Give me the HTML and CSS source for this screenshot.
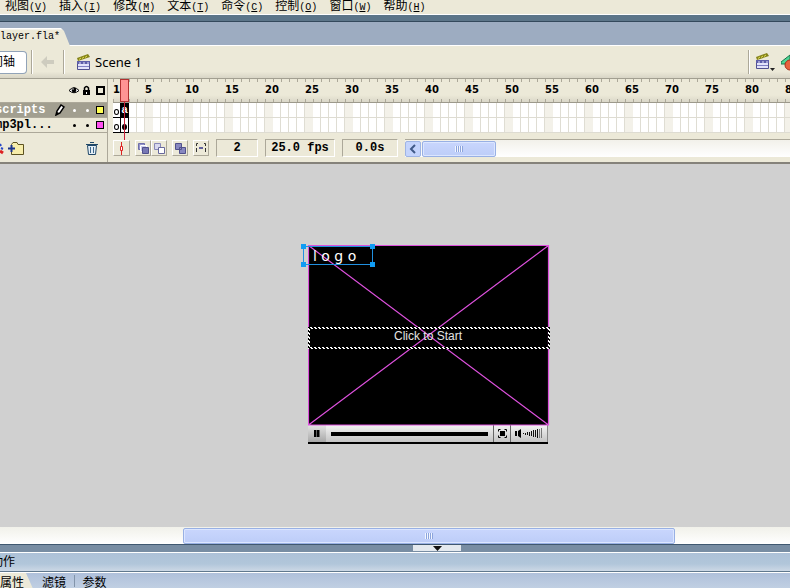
FILE: index.html
```
<!DOCTYPE html>
<html lang="zh-CN">
<head>
<meta charset="utf-8">
<title>player.fla</title>
<link rel="stylesheet" href="styles.css">
</head>
<body>
<svg class="defs" aria-hidden="true">
  <symbol id="clapper" viewBox="0 0 16 16">
    <path d="M1 4L12 0L14 3L2 7Z" fill="#85831a"/>
    <path d="M3 5.500L5 4M6 4.500L8 3M9 3.500L11 2" stroke="#e4df55"/>
    <path d="M1.500 7.500h12v8h-12z" fill="#e3e3fa" stroke="#50508f"/>
    <path d="M1 8.500h13" stroke="#5f5faa" stroke-width="3"/>
    <path d="M3 9h2M7 9h2M11 9h2" stroke="#e3e3fa"/>
    <path d="M2 12.500h11" stroke="#8080c4"/>
  </symbol>
</svg>

<nav class="menu">
  <a href="#">视图<span class="key">(<u>V</u>)</span></a>
  <a href="#">插入<span class="key">(<u>I</u>)</span></a>
  <a href="#">修改<span class="key">(<u>M</u>)</span></a>
  <a href="#">文本<span class="key">(<u>T</u>)</span></a>
  <a href="#">命令<span class="key">(<u>C</u>)</span></a>
  <a href="#">控制<span class="key">(<u>O</u>)</span></a>
  <a href="#">窗口<span class="key">(<u>W</u>)</span></a>
  <a href="#">帮助<span class="key">(<u>H</u>)</span></a>
</nav>
<div class="dock-edge"></div>
<div class="documents"><button class="doc-tab">layer.fla*</button></div>

<header class="edit-bar">
  <button class="timeline-toggle">间轴</button>
  <i class="rule"></i>
  <button class="back" aria-label="Back" disabled>
    <svg width="14" height="12" viewBox="0 0 14 12"><path d="M0 6L6 0V4H13V8H6V12Z" fill="#ceccbf"/></svg>
  </button>
  <i class="rule"></i>
  <a class="scene" href="#"><svg width="16" height="16"><use href="#clapper"/></svg>Scene 1</a>
  <div class="edit-right">
    <i class="rule"></i>
    <button class="edit-scene" aria-label="Edit scene">
      <svg width="21" height="19" viewBox="0 0 21 19"><use href="#clapper" width="16" height="16"/><path d="M15 15h5l-2.500 3z" fill="#222"/></svg>
    </button>
    <button class="edit-symbol" aria-label="Edit symbols">
      <svg width="9" height="17" viewBox="0 0 9 17"><path d="M0 8L9 1V10H0Z" fill="#4fd596" stroke="#187548"/><circle cx="9" cy="11" r="5" fill="#e8613d" stroke="#a83018"/></svg>
    </button>
  </div>
</header>

<main class="timeline">
  <section class="layers">
    <div class="layer-head">
      <svg width="36" height="11" viewBox="0 0 36 11">
        <path d="M0 5.500Q5 0 10 5.500Q5 10 0 5.500Z" fill="#fff" stroke="#000"/><circle cx="5" cy="5" r="2.400"/><circle cx="4" cy="4" r=".7" fill="#fff"/>
        <path d="M14 5h7v5h-7z"/><path d="M15.500 5V3Q17.500 0 19.500 3V5" fill="none" stroke="#000" stroke-width="1.500"/><path d="M17 7h1v2h-1z" fill="#fff"/>
        <path d="M28 2h7v7h-7z" fill="none" stroke="#000" stroke-width="2"/>
      </svg>
    </div>
    <div class="layer active">
      <span class="name">scripts</span>
      <svg class="pencil" width="10" height="12" viewBox="0 0 10 12"><path d="M1 11L2 7L6 1L9 3L5 9Z" fill="#fff" stroke="#000" stroke-width="1.500"/><path d="M1 11L2 8L4 9Z"/></svg>
      <i class="dot"></i><i class="dot"></i><i class="swatch yellow"></i>
    </div>
    <div class="layer">
      <span class="name">mp3pl...</span>
      <i class="dot"></i><i class="dot"></i><i class="swatch pink"></i>
    </div>
    <div class="layer-tools">
      <button aria-label="Add motion guide"><svg width="4" height="14" viewBox="0 0 4 14"><path d="M0 3l1 2M1 7l2 1" stroke="#2847c8" stroke-width="2"/><path d="M0 10l3 2" stroke="#d22" stroke-width="3"/></svg></button>
      <button aria-label="Insert layer folder"><svg width="16" height="13" viewBox="0 0 16 13"><path d="M3.500 12.500V2.500L5 .5H9L10 2.500H15.500V12.500Z" fill="#f7edaa" stroke="#5c5220"/><path d="M0 6.500H7M3.500 3V10" stroke="#1c348c" stroke-width="2"/></svg></button>
      <button class="trash" aria-label="Delete layer"><svg width="12" height="13" viewBox="0 0 12 13"><path d="M1.500 3.500H10.500L9.500 12.500H2.500Z" fill="#e4eef6" stroke="#204868"/><path d="M0 2.500H12M4 .5H8" stroke="#204868"/><path d="M4.500 5V11M7.500 5V11" stroke="#3c688c"/></svg></button>
    </div>
  </section>

  <section class="frames">
    <div class="ruler">
      <span class="first">1</span><span>5</span><span>10</span><span>15</span><span>20</span><span>25</span><span>30</span><span>35</span><span>40</span><span>45</span><span>50</span><span>55</span><span>60</span><span>65</span><span>70</span><span>75</span><span>80</span><span>85</span>
    </div>
    <div class="frame-row"><i class="frame"><b class="ring"></b></i><i class="frame chosen">a</i></div>
    <div class="frame-row"><i class="frame"><b class="ring"></b></i><i class="frame"><b class="ring full"></b></i></div>
    <div class="playhead"></div>
    <div class="frame-tools">
      <button class="center" aria-label="Center frame"><svg width="7" height="13" viewBox="0 0 7 13"><path d="M3.500 0V13" stroke="#d22"/><path d="M2.500 4.500h2v4h-2z" fill="#fff" stroke="#d22"/></svg></button>
      <div class="onion">
        <button aria-label="Onion skin"><svg width="11" height="11" viewBox="0 0 11 11"><path d="M.5 .5h6v6h-6z" fill="#9696cc" stroke="#6e6eaa"/><path d="M2.500 2.500h6v6h-6z" fill="#ccccec" stroke="#fff"/><path d="M4.500 4.500h6v6h-6z" fill="#7878b4" stroke="#50508c"/></svg></button>
        <button aria-label="Onion skin outlines"><svg width="11" height="11" viewBox="0 0 11 11"><path d="M.5 .5h6v6h-6z" fill="#d8d8ee" stroke="#8888b8"/><path d="M4.500 4.500h6v6h-6z" fill="#fff" stroke="#68689c"/></svg></button>
      </div>
      <button aria-label="Edit multiple frames"><svg width="11" height="11" viewBox="0 0 11 11"><path d="M.5 .5h6v6h-6zM4.500 4.500h6v6h-6z" fill="#8888c0" stroke="#50508c"/></svg></button>
      <button aria-label="Modify onion markers"><svg width="12" height="12" viewBox="0 0 12 12"><path d="M3 1.500H1.500V10.500H3M9 1.500H10.500V10.500H9" fill="none" stroke="#333" stroke-dasharray="4 2"/><path d="M4 5h4v2H4z" fill="#60609c"/></svg></button>
      <output class="field current">2</output>
      <output class="field rate">25.0 fps</output>
      <output class="field time">0.0s</output>
      <div class="scroll">
        <button class="scroll-left" aria-label="Scroll left"><svg width="8" height="10" viewBox="0 0 8 10"><path d="M6 1L2 5L6 9" fill="none" stroke="#405a88" stroke-width="2"/></svg></button>
        <div class="thumb"><i class="grip"></i></div>
      </div>
    </div>
  </section>
</main>

<section class="pasteboard">
  <div class="movie">
    <div class="video">
      <svg class="cross" width="242" height="181" viewBox="0 0 242 181">
        <defs><pattern id="ants" width="4" height="4" patternUnits="userSpaceOnUse"><path d="M0 0h2v1h-2zM1 1h2v1h-2zM2 2h2v1h-2zM3 3h1v1h-1zM0 3h1v1h-1z" fill="#fff"/></pattern></defs>
        <path d="M.5 .5H240.500V180H.5ZM.5 .5L240.500 180M240.500 .5L.5 180" fill="none" stroke="#dc50dc" stroke-width="1.200"/>
        <rect x="1" y="83" width="240" height="20" fill="none" stroke="#000" stroke-width="2"/>
        <rect x="1" y="83" width="240" height="20" fill="none" stroke="url(#ants)" stroke-width="2"/>
      </svg>
      <div class="start">Click to Start</div>
      <div class="logo">l o g o<i class="h tl"></i><i class="h tr"></i><i class="h bl"></i><i class="h br"></i></div>
    </div>
    <div class="controls">
      <button class="pause" aria-label="Pause"><svg width="6" height="7" viewBox="0 0 6 7"><path d="M0 0h2.500v7H0zM3 0h2.500v7H3z"/></svg></button>
      <div class="seek"></div>
      <button class="full-screen" aria-label="Full screen"><svg width="9" height="9" viewBox="0 0 9 9"><path d="M2.500 .5H.5V2.500M6.500 .5H8.500V2.500M.5 6.500V8.500H2.500M8.500 6.500V8.500H6.500" fill="none" stroke="#000"/><path d="M2 2h5v5H2z"/></svg></button>
      <button class="volume" aria-label="Volume"><svg width="29" height="11" viewBox="0 0 29 11"><path d="M0 3h2v5H0zM3 3L6 1V10L3 8Z"/><path d="M8.500 5v1M10.500 5v2M12.500 4v3M14.500 4v4M16.500 3v5M18.500 2v7M20.500 2v7M22.500 1v9" stroke="#111"/><path d="M24.500 1v9M26.500 0v10" stroke="#777"/></svg></button>
    </div>
  </div>
</section>

<div class="h-scroll"><div class="thumb"><i class="grip"></i></div></div>
<div class="splitter"><button aria-label="Collapse panels"><svg width="9" height="5" viewBox="0 0 9 5"><path d="M0 0H9L4.500 5Z" fill="#111"/></svg></button></div>
<div class="panel-title"><span>动作</span></div>
<footer class="panel-tabs">
  <button class="selected">属性</button>
  <button>滤镜</button>
  <i></i>
  <button>参数</button>
</footer>
</body>
</html>
```
FILE: styles.css
```
* { box-sizing: border-box; }
body {
  margin: 0;
  height: 100vh;
  display: flex;
  flex-direction: column;
  overflow: hidden;
  background: #ece9d8;
  color: #000;
  font: 12px/16px "Liberation Sans", "Noto Sans CJK SC", sans-serif;
}
body > * { flex: none; }
button { margin: 0; padding: 0; border: 0; background: none; color: inherit; font: inherit; }
a { color: inherit; text-decoration: none; }
svg { display: block; flex: none; }
i, output { font-style: normal; }
.defs { position: absolute; width: 0; height: 0; }

/* Menu and document tabs */
.menu { height: 14px; padding-left: 5px; display: flex; gap: 12px; line-height: 12px; white-space: nowrap; }
.key { font: 10px/12px "Liberation Mono", monospace; }
.dock-edge { height: 8px; background: #5c7589; border-top: 1px solid #fff; border-bottom: 1px solid #34495c; }
.documents { height: 24px; padding-top: 6px; background: #9dacc1; border-bottom: 1px solid #fff; }
.doc-tab {
  display: block;
  width: 70px;
  height: 18px;
  text-align: left;
  background: linear-gradient(#fff 1px, #ece9d8 2px);
  clip-path: polygon(0 0, 61px 0, 64px 3px, 70px 100%, 0 100%);
  font: 10px/16px "Liberation Mono", monospace;
}

/* Edit bar */
.edit-bar { height: 32px; display: flex; align-items: center; background: linear-gradient(#ece9d8 80%, #d8d5c6); }
.timeline-toggle {
  width: 27px;
  height: 23px;
  display: flex;
  justify-content: flex-end;
  align-items: center;
  padding-right: 11px;
  overflow: hidden;
  border: 1px solid #91a3b8;
  border-left: 0;
  border-radius: 0 4px 4px 0;
  background: #fff;
  white-space: nowrap;
}
.rule { width: 2px; height: 24px; background: #aca899; border-right: 1px solid #fff; }
.timeline-toggle + .rule { margin-left: 4px; }
.back { width: 30px; display: flex; justify-content: center; }
.scene { display: flex; align-items: center; gap: 3px; margin-left: 11px; font: 13px/16px "Noto Sans", sans-serif; }
.edit-right { margin-left: auto; display: flex; align-items: center; }
.edit-scene { margin-left: 5px; }
.edit-symbol { margin-left: 5px; }

/* Timeline */
.timeline { height: 86px; display: grid; grid-template-columns: 108px 1fr; border-top: 1px solid #a29f91; border-bottom: 2px solid #85827a; }
.layers { border-right: 1px solid #aca899; min-width: 0; }
.layer-head { height: 24px; display: flex; align-items: center; justify-content: flex-end; padding-right: 2px; border-bottom: 1px solid #aca899; }
.layer { height: 15px; display: flex; align-items: center; gap: 10px; padding-right: 3px; overflow: hidden; border-bottom: 1px solid #aca899; background: #ece9d8; font: bold 12px/14px "Liberation Mono", monospace; }
.layer.active { background: #a29f90; color: #fff; }
.name { flex: 1; text-indent: -5px; white-space: nowrap; }
.pencil { margin-right: -2px; }
.dot { width: 3px; height: 3px; border-radius: 50%; background: currentColor; }
.swatch { width: 8px; height: 8px; margin-left: -3px; border: 1px solid #000; }
.yellow { background: #ffff55; }
.pink { background: #ff50f0; }
.layer-tools { display: flex; align-items: center; gap: 4px; height: 18px; margin-top: 6px; padding-right: 9px; }
.trash { margin-left: auto; }

.frames { position: relative; min-width: 0; padding-left: 5px; display: flex; flex-direction: column; }
.ruler {
  height: 24px;
  display: flex;
  overflow: hidden;
  border-bottom: 1px solid #9c998c;
  background:
    repeating-linear-gradient(90deg, #aca899 0 1px, transparent 1px 8px) 0 0 / auto 3px no-repeat,
    repeating-linear-gradient(90deg, #aca899 0 1px, transparent 1px 8px) 0 100% / auto 3px no-repeat,
    linear-gradient(#ece9d8 70%, #dad7c8);
  font: bold 10px/21px "DejaVu Sans", sans-serif;
}
.ruler span { flex: none; width: 40px; }
.ruler .first { width: 32px; }
.frame-row {
  height: 15px;
  display: flex;
  border-bottom: 1px solid #dedcd2;
  background:
    repeating-linear-gradient(90deg, transparent 0 32px, #f3f1e9 32px 40px),
    repeating-linear-gradient(90deg, #fff 0 7px, #dfddd3 7px 8px);
}
.frame { width: 8px; height: 15px; display: flex; justify-content: center; align-items: flex-end; padding-bottom: 2px; border-right: 1px solid #000; border-bottom: 1px solid #000; background: #fff; }
.chosen { background: #000; color: #fff; font: bold 11px/12px "Liberation Sans", sans-serif; }
.ring { width: 5px; height: 6px; border: 1px solid #000; border-radius: 50%; }
.full { background: #000; }
.playhead { position: absolute; top: 0; left: 12px; width: 9px; height: 23px; border: 1px solid #b03030; background: #ff9494; }
.playhead::after { content: ""; position: absolute; top: 22px; left: 3px; width: 1px; height: 38px; background: #c82038; }
.frame-tools { display: flex; align-items: center; gap: 5px; height: 18px; margin-top: 6px; }
.frame-tools button { width: 16px; height: 16px; display: flex; align-items: center; justify-content: center; border: 1px solid #fff; border-right-color: #aca899; border-bottom-color: #aca899; }
.frame-tools .center { width: 17px; }
.onion { display: flex; }
.field { height: 18px; border: 1px solid #aca899; border-right-color: #fff; border-bottom-color: #fff; text-align: center; font: bold 12px/16px "Liberation Mono", monospace; white-space: nowrap; }
.current { width: 42px; margin-left: 2px; }
.rate { width: 70px; margin-left: 2px; }
.time { width: 56px; margin-left: 2px; }
.scroll { flex: 1; height: 18px; display: flex; align-items: center; gap: 1px; margin-left: 2px; border-top: 1px solid #aca899; background: linear-gradient(#f2f1ea, #fff); }
.frame-tools .scroll-left { border: 1px solid #9eb4e4; border-radius: 2px; background: #c4d4fc; }
.thumb { display: flex; align-items: center; justify-content: center; height: 16px; border: 1px solid #98b0e4; border-radius: 2px; background: linear-gradient(#c9d6fd, #bdcdf8); box-shadow: inset 0 0 0 1px #dce6ff; }
.scroll .thumb { width: 74px; }
.grip { width: 8px; height: 6px; background: repeating-linear-gradient(90deg, #f2f6ff 0 1px, #8ca4dc 1px 2px); }

/* Pasteboard */
.pasteboard { flex: 1 1 0; min-height: 0; display: flex; align-items: center; justify-content: center; padding: 0 0 2px 66px; background: #d0d0d0; }
.movie { width: 240px; }
.video { position: relative; height: 180px; background: #000; }
.cross { position: absolute; top: 0; left: 0; }
.start { position: absolute; inset: 83px 0 auto; color: #e4e4e4; text-align: center; }
.logo { position: absolute; top: 1px; left: -5px; width: 70px; height: 19px; padding-left: 9px; border: 1px solid #2090e0; color: #fff; font: 14px/18px "DejaVu Sans", sans-serif; white-space: nowrap; }
.h { position: absolute; width: 5px; height: 5px; background: #109cf4; }
.tl, .tr { top: -3px; }
.bl, .br { bottom: -3px; }
.tl, .bl { left: -3px; }
.tr, .br { right: -3px; }
.controls { height: 19px; display: flex; border-bottom: 2px solid #000; background: linear-gradient(#f4f4f4, #c4c4c4); }
.controls button { display: flex; align-items: center; justify-content: center; }
.pause { width: 18px; }
.controls .pause { background: linear-gradient(#e4e4e4, #a8a8a8); }
.seek { flex: 1; height: 4px; margin: 7px 5px 0; background: #000; }
.full-screen, .volume { border-left: 1px solid #666; }
.full-screen { width: 17px; }
.volume { width: 38px; border-right: 1px solid #888; }

/* Bottom scroll bar and panels */
.h-scroll { height: 17px; padding: 1px 115px 0 183px; background: linear-gradient(#f1f1ea, #fff); }
.splitter { height: 8px; padding-left: 84px; display: flex; justify-content: center; background: #788da3; border-top: 1px solid #405870; }
.splitter button { width: 48px; height: 6px; display: flex; justify-content: center; padding-top: 1px; background: #e4e9ee; }
.panel-title { height: 20px; border-top: 1px solid #fff; border-bottom: 1px solid #60788e; background: linear-gradient(#adc1d7, #b1c6da 60%, #ccd8e5); line-height: 18px; }
.panel-title span { display: flex; justify-content: flex-end; width: 15px; overflow: hidden; white-space: nowrap; }
.panel-tabs { height: 16px; display: flex; align-items: flex-start; border-top: 1px solid #fff; background: linear-gradient(#afc0db, #c0cfe2); line-height: 16px; }
.panel-tabs button { width: 40px; height: 18px; padding-top: 1px; }
.panel-tabs .selected { width: 34px; text-align: left; background: #ece9d8; clip-path: polygon(0 0, 26px 0, 34px 100%, 0 100%); }
.panel-tabs i { width: 1px; height: 12px; margin-top: 2px; background: #8294aa; }
.panel-tabs i + button { width: 39px; }
```
